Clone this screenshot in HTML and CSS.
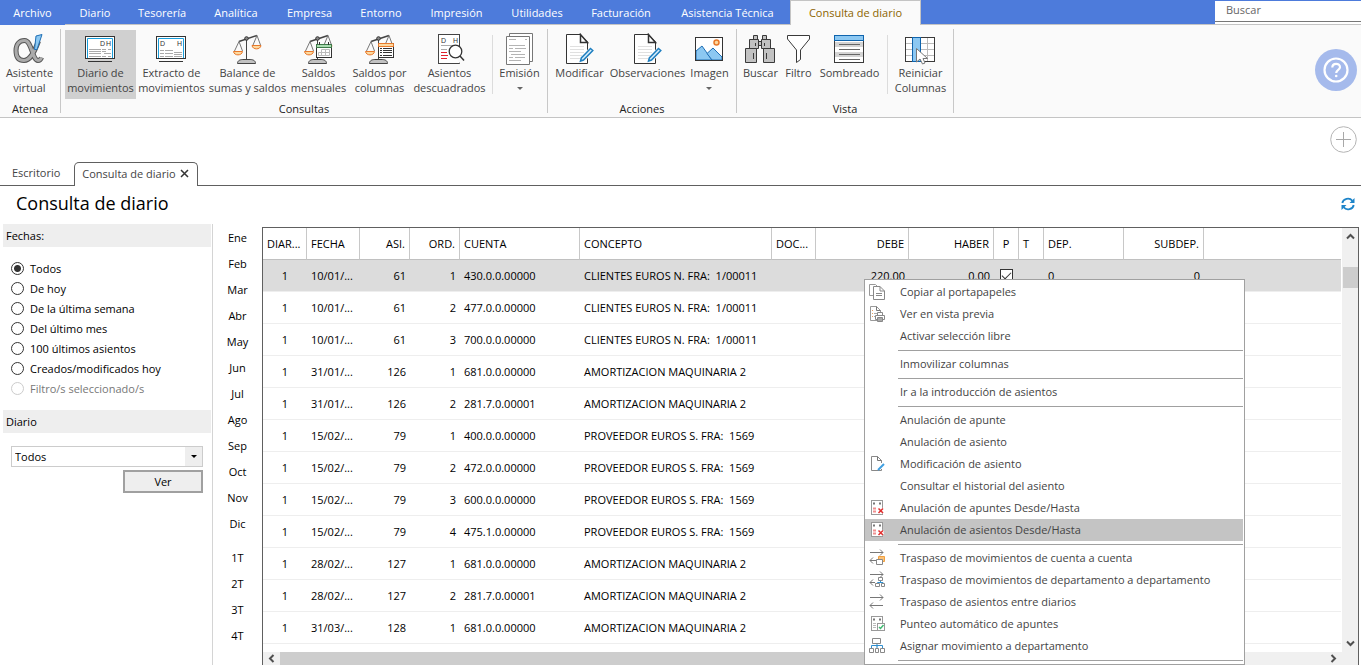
FILE: index.html
```html
<!DOCTYPE html>
<html lang="es">
<head>
<meta charset="utf-8">
<title>Consulta de diario</title>
<link rel="stylesheet" href="styles.css">
</head>
<body>
<svg class="defs" aria-hidden="true">
  <symbol id="scale" viewBox="0 0 32 32">
    <path d="M8 8.500L26 2.500" stroke="#444" stroke-width="1.500" fill="none"/>
    <path d="M15.500 6V27" stroke="#444"/>
    <circle cx="15.500" cy="5.500" r="1.800" fill="#888" stroke="#333"/>
    <path d="M8 8.500L3.500 18M8 8.500L11.500 18M26 2.500L22 12M26 2.500L29.500 12" stroke="#777" fill="none"/>
    <path d="M2.500 18.500H11.500C11 23 3 23 2.500 18.500Z" fill="#fdd9a0" stroke="#e8792b"/>
    <path d="M21 12.500H30C29.500 17 21.500 17 21 12.500Z" fill="#fdd9a0" stroke="#e8792b"/>
    <path d="M6.500 30.500C6.500 27 10 26.500 12 26.500H19C21 26.500 24.500 27 24.500 30.500Z" fill="#c2c2c2" stroke="#444"/>
  </symbol>
  <symbol id="edit-page" viewBox="0 0 32 32">
    <path d="M3.500 1.500H17.500L24.500 9V30.500H3.500Z" fill="#fff" stroke="#333"/>
    <path d="M17.500 1.500V9.500H24.500Z" fill="#fff" stroke="#333" stroke-width="1.500"/>
    <path d="M7 13.500H21M7 16.500H21M7 19.500H21M7 22.500H19M7 25.500H17" stroke="#e0e0e0"/>
    <path d="M26.500 14L31 18.500L20 30L15 30Z" fill="#fafafa"/>
    <path d="M27.500 15.500L29.800 17.500L20.500 27L17.500 28L18.300 25Z" fill="#d6ecfa" stroke="#1f7fc0" stroke-width="1.500"/>
  </symbol>
  <symbol id="void-entry" viewBox="0 0 18 18">
    <rect x="3.500" y="1.500" width="11" height="14" fill="#fff" stroke="#999"/>
    <path d="M5 4.500H7M11 4.500H13" stroke="#777" stroke-width="2"/>
    <path d="M5 9.500H8M5 12.500H8" stroke="#f09090" stroke-width="2"/>
    <path d="M10.500 9.500L15 14M15 9.500L10.500 14" stroke="#fff" stroke-width="3.500"/>
    <path d="M10.500 9.500L15 14M15 9.500L10.500 14" stroke="#e03030" stroke-width="1.500"/>
  </symbol>
</svg>

<div class="app">
  <nav class="menubar">
    <div class="menu-tabs">
      <a class="menu-tab" href="#">Archivo</a>
      <a class="menu-tab" href="#">Diario</a>
      <a class="menu-tab" href="#">Tesorería</a>
      <a class="menu-tab" href="#">Analítica</a>
      <a class="menu-tab" href="#">Empresa</a>
      <a class="menu-tab" href="#">Entorno</a>
      <a class="menu-tab" href="#">Impresión</a>
      <a class="menu-tab" href="#">Utilidades</a>
      <a class="menu-tab" href="#">Facturación</a>
      <a class="menu-tab" href="#">Asistencia Técnica</a>
      <a class="menu-tab current" href="#">Consulta de diario</a>
    </div>
    <input class="search" type="search" placeholder="Buscar" aria-label="Buscar">
  </nav>

  <header class="ribbon">
    <section class="group atenea">
      <div class="tools">
        <button class="tool">
          <svg class="icon" viewBox="0 0 32 32">
            <path d="M25.500 8C21 20 17 27.500 11 27.500C5 27.500 3 23 3 17.500C3 11 6.500 7.500 11.500 7.500C19 7.500 19 27 25 27.500C27 27.500 28 26 28.500 24.500" fill="none" stroke="#555" stroke-width="5"/>
            <path d="M25.500 8C21 20 17 27.500 11 27.500C5 27.500 3 23 3 17.500C3 11 6.500 7.500 11.500 7.500C19 7.500 19 27 25 27.500C27 27.500 28 26 28.500 24.500" fill="none" stroke="#aaa" stroke-width="3"/>
            <path d="M23 3L29 1.500L24 16.500H21.500Z" fill="#8cc8f2" stroke="#1f6fb5"/>
          </svg>
          <span>Asistente<br>virtual</span>
        </button>
      </div>
      <h2 class="group-name">Atenea</h2>
    </section>

    <section class="group consultas">
      <div class="tools">
        <button class="tool pressed">
          <svg class="icon" viewBox="0 0 32 32">
            <rect x="1.500" y="3.500" width="29" height="22" fill="#fff" stroke="#333"/>
            <path d="M3.500 25V5.500H28.500V25" fill="none" stroke="#1a9fdc"/>
            <text class="glyph" x="16" y="13">D</text><text class="glyph" x="22" y="13">H</text>
            <path d="M5 16.500H17M5 18.500H17M5 20.500H17M5 23.500H17M18 16.500H22M24 16.500H27M18 18.500H22M20 20.500H27M18 23.500H22M24 23.500H27" stroke="#aaa"/>
            <path d="M4 28.500H28" stroke="#333"/>
          </svg>
          <span>Diario de<br>movimientos</span>
        </button>
        <button class="tool">
          <svg class="icon" viewBox="0 0 32 32">
            <rect x="1.500" y="3.500" width="29" height="22" fill="#fff" stroke="#333"/>
            <path d="M3.500 25V5.500H28.500V25" fill="none" stroke="#1a9fdc"/>
            <text class="glyph" x="5" y="13">D</text><text class="glyph" x="22" y="13">H</text>
            <path d="M5 17.500H9M5 20.500H9M5 23.500H9M10 17.500H18M10 20.500H18M10 23.500H18M19 19.500H27M19 21.500H27M19 23.500H27" stroke="#aaa"/>
            <path d="M4 28.500H28" stroke="#333"/>
          </svg>
          <span>Extracto de<br>movimientos</span>
        </button>
        <button class="tool">
          <svg class="icon"><use href="#scale"/></svg>
          <span>Balance de<br>sumas y saldos</span>
        </button>
        <button class="tool">
          <svg class="icon" viewBox="0 0 32 32">
            <use href="#scale"/>
            <rect x="14.500" y="11.500" width="15" height="13" fill="#fff" stroke="#333"/>
            <path d="M14.500 11.500H29.500V14.500H14.500Z" fill="#a8dcb0" stroke="#3d7a49"/>
            <path d="M17.500 9V12M26.500 9V12" stroke="#333"/>
            <path d="M19.500 16.500H27.500V22.500H16.500V19.500H27.500M19.500 16.500V22.500M23.500 16.500V22.500" fill="none" stroke="#bbb"/>
          </svg>
          <span>Saldos<br>mensuales</span>
        </button>
        <button class="tool">
          <svg class="icon" viewBox="0 0 32 32">
            <use href="#scale"/>
            <rect x="15.500" y="10.500" width="15" height="14" fill="#fff" stroke="#333"/>
            <path d="M15.500 10.500H30.500V13.500H15.500Z" fill="#fdd9a0" stroke="#e8792b"/>
            <path d="M17 15.500H19M20 15.500H29M17 17.500H19M20 17.500H29M17 19.500H19M20 19.500H29M17 22.500H19M20 22.500H29" stroke="#333"/>
          </svg>
          <span>Saldos por<br>columnas</span>
        </button>
        <button class="tool">
          <svg class="icon" viewBox="0 0 32 32">
            <rect x="5.500" y="1.500" width="21" height="29" fill="#fff" stroke="#444"/>
            <text class="glyph" x="8" y="10">D</text><text class="glyph" x="20" y="10">H</text>
            <path d="M8 12.500H24M8 16.500H14" stroke="#aaa"/>
            <path d="M8 19.500H14M8 22.500H15M8 25.500H14" stroke="#e0202c"/>
            <path d="M26 22L30 29" stroke="#fafafa" stroke-width="7"/>
            <circle cx="22.500" cy="18.500" r="6.300" fill="#fff" stroke="#333" stroke-width="1.300"/>
            <path d="M27 23L31 27.500" stroke="#333" stroke-width="1.500"/>
          </svg>
          <span>Asientos<br>descuadrados</span>
        </button>
        <i class="tool-rule"></i>
        <button class="tool">
          <svg class="icon" viewBox="-1 0 32 32">
            <path d="M5.500 0.500H28.500V28.500H5.500Z" fill="#fff" stroke="#777"/>
            <path d="M2.500 3.500H25.500V31.500H2.500Z" fill="#fff" stroke="#777"/>
            <path d="M5 6.500H12M5 12.500H21M5 15.500H9M11 15.500H22M5 18.500H17M7 21.500H21M5 24.500H9M11 24.500H21M5 27.500H17M21 6.500H23" stroke="#b4b4b4"/>
          </svg>
          <span>Emisión<i class="caret"></i></span>
        </button>
      </div>
      <h2 class="group-name">Consultas</h2>
    </section>

    <section class="group acciones">
      <div class="tools">
        <button class="tool">
          <svg class="icon"><use href="#edit-page"/></svg>
          <span>Modificar</span>
        </button>
        <button class="tool">
          <svg class="icon"><use href="#edit-page"/></svg>
          <span>Observaciones</span>
        </button>
        <button class="tool">
          <svg class="icon" viewBox="0 0 32 32">
            <rect x="2.500" y="4.500" width="27" height="23" fill="#fff" stroke="#333"/>
            <path d="M3 18L9 13L19 27H3Z" fill="#8cc8f2" stroke="#1f6fb5"/>
            <path d="M14 20.500L20 15L29 24V27H19Z" fill="#8cc8f2" stroke="#1f6fb5"/>
            <circle cx="23.500" cy="9.500" r="2.500" fill="#fdd9a0" stroke="#e8792b" stroke-width="1.500"/>
            <rect x="2.500" y="4.500" width="27" height="23" fill="none" stroke="#333"/>
          </svg>
          <span>Imagen<i class="caret"></i></span>
        </button>
      </div>
      <h2 class="group-name">Acciones</h2>
    </section>

    <section class="group vista">
      <div class="tools">
        <button class="tool">
          <svg class="icon" viewBox="0 0 32 32">
            <g fill="#c2c2c2" stroke="#3a3a3a">
              <path d="M9.500 2.500H13.500V6.500H9.500ZM18.500 2.500H22.500V6.500H18.500Z"/>
              <rect x="14.500" y="8.500" width="3" height="4"/>
              <path d="M5.500 6.500H14.500V15.500H5.500ZM17.500 6.500H26.500V15.500H17.500Z"/>
              <path d="M1.500 15.500H12.500V29.500H1.500ZM19.500 15.500H30.500V29.500H19.500Z"/>
              <path d="M9.500 20V26M22.500 20V26M11.500 10V13M20.500 10V13"/>
            </g>
          </svg>
          <span>Buscar</span>
        </button>
        <button class="tool">
          <svg class="icon" viewBox="0 0 32 32">
            <path d="M5.500 2.500H27.500V6L18.500 17V26.500L14.500 29.500V17L5.500 6Z" fill="#fff" stroke="#3a3a3a"/>
          </svg>
          <span>Filtro</span>
        </button>
        <button class="tool">
          <svg class="icon" viewBox="0 0 32 32">
            <rect x="1.500" y="2.500" width="29" height="27" fill="#fff" stroke="#3a3a3a"/>
            <path d="M2 11.500H30M2 21.500H30" stroke="#d4d4d4" stroke-width="5"/>
            <path d="M6 11.500H27M6 16.500H27M6 21.500H27M6 26.500H27" stroke="#666"/>
            <rect x="1.500" y="2.500" width="29" height="5" fill="#8cc8f2" stroke="#0f64ad"/>
          </svg>
          <span>Sombreado</span>
        </button>
        <i class="tool-rule"></i>
        <button class="tool">
          <svg class="icon" viewBox="0 0 32 32">
            <rect x="1.500" y="4.500" width="29" height="24" fill="#fff" stroke="#3a3a3a"/>
            <path d="M2 10.500H30M2 16.500H30M2 22.500H30M16.500 5V28M23.500 5V28" stroke="#bbb"/>
            <rect x="8.500" y="4.500" width="8" height="24" fill="#8cc8f2" stroke="#0f64ad"/>
            <path d="M12.500 15.500V29L16 26L18.500 31L21 30L19 25.500H23.500Z" fill="#fff" stroke="#777"/>
          </svg>
          <span>Reiniciar<br>Columnas</span>
        </button>
      </div>
      <h2 class="group-name">Vista</h2>
    </section>

    <button class="help" aria-label="Ayuda">
      <svg viewBox="0 0 42 42">
        <circle cx="21" cy="21" r="21" fill="#a5baec"/>
        <circle cx="21" cy="21" r="11.500" fill="none" stroke="#fff" stroke-width="2.200"/>
        <path d="M17.300 18.500C17.300 13.500 25 13.800 25 18.200C25 21 21.200 20.800 21.200 24" fill="none" stroke="#fff" stroke-width="2.200"/>
        <circle cx="21.200" cy="27" r="1.300" fill="#fff"/>
      </svg>
    </button>
  </header>

  <div class="tabstrip">
    <a class="doc-tab" href="#">Escritorio</a>
    <div class="doc-tab active">
      <a href="#">Consulta de diario</a>
      <button class="close" aria-label="Cerrar"><svg viewBox="0 0 9 9"><path d="M1 1L8 8M8 1L1 8" stroke="#333" stroke-width="1.500"/></svg></button>
    </div>
    <button class="add" aria-label="Añadir"><svg viewBox="0 0 27 27"><circle cx="13.500" cy="13.500" r="12.800" fill="none" stroke="#b4b4b4"/><path d="M6 13.500H21M13.500 6V21" stroke="#a8a8a8"/></svg></button>
  </div>

  <div class="titlebar">
    <h1>Consulta de diario</h1>
    <button class="refresh" aria-label="Actualizar"><svg viewBox="0 0 14 14"><path d="M1.300 6C2 1.500 8.500 0 11.300 3.700M12.700 8C12 12.500 5.500 14 2.700 10.300" fill="none" stroke="#1d84c9" stroke-width="1.800"/><path d="M13.500 1V6H8.500ZM0.500 13V8H5.500Z" fill="#1d84c9"/></svg></button>
  </div>

  <main class="workspace">
    <aside class="filters">
      <h3 class="panel-head">Fechas:</h3>
      <div class="radios">
        <label><input type="radio" name="fecha" checked>Todos</label>
        <label><input type="radio" name="fecha">De hoy</label>
        <label><input type="radio" name="fecha">De la última semana</label>
        <label><input type="radio" name="fecha">Del último mes</label>
        <label><input type="radio" name="fecha">100 últimos asientos</label>
        <label><input type="radio" name="fecha">Creados/modificados hoy</label>
        <label class="off"><input type="radio" name="fecha" disabled>Filtro/s seleccionado/s</label>
      </div>
      <h3 class="panel-head">Diario</h3>
      <div class="journal">
        <div class="select-box">
          <select aria-label="Diario"><option>Todos</option></select>
          <span class="select-arrow"></span>
        </div>
        <button class="view">Ver</button>
      </div>
    </aside>

    <nav class="periods">
      <a href="#">Ene</a><a href="#">Feb</a><a href="#">Mar</a><a href="#">Abr</a><a href="#">May</a><a href="#">Jun</a><a href="#">Jul</a><a href="#">Ago</a><a href="#">Sep</a><a href="#">Oct</a><a href="#">Nov</a><a href="#">Dic</a>
      <a class="quarter" href="#">1T</a><a href="#">2T</a><a href="#">3T</a><a href="#">4T</a>
    </nav>

    <section class="grid">
      <div class="grid-body">
        <table>
          <colgroup><col class="c44"><col class="c53"><col class="c50"><col class="c50"><col class="c120"><col class="c192"><col class="c44"><col class="c93"><col class="c85"><col class="c25"><col class="c25"><col class="c80"><col class="c80"><col></colgroup>
          <thead>
            <tr><th>DIAR...</th><th>FECHA</th><th class="r">ASI.</th><th class="r">ORD.</th><th>CUENTA</th><th>CONCEPTO</th><th>DOC...</th><th class="r">DEBE</th><th class="r">HABER</th><th class="c">P</th><th>T</th><th>DEP.</th><th class="r">SUBDEP.</th><th></th></tr>
          </thead>
          <tbody>
            <tr class="picked"><td class="c">1</td><td>10/01/...</td><td class="r">61</td><td class="r">1</td><td>430.0.0.00000</td><td class="pre">CLIENTES EUROS N. FRA:  1/00011</td><td></td><td class="r">220.00</td><td class="r">0.00</td><td class="c"><input type="checkbox" checked aria-label="Punteado"></td><td></td><td>0</td><td class="r">0</td><td></td></tr>
            <tr><td class="c">1</td><td>10/01/...</td><td class="r">61</td><td class="r">2</td><td>477.0.0.00000</td><td class="pre">CLIENTES EUROS N. FRA:  1/00011</td><td colspan="8"></td></tr>
            <tr><td class="c">1</td><td>10/01/...</td><td class="r">61</td><td class="r">3</td><td>700.0.0.00000</td><td class="pre">CLIENTES EUROS N. FRA:  1/00011</td><td colspan="8"></td></tr>
            <tr><td class="c">1</td><td>31/01/...</td><td class="r">126</td><td class="r">1</td><td>681.0.0.00000</td><td>AMORTIZACION MAQUINARIA 2</td><td colspan="8"></td></tr>
            <tr><td class="c">1</td><td>31/01/...</td><td class="r">126</td><td class="r">2</td><td>281.7.0.00001</td><td>AMORTIZACION MAQUINARIA 2</td><td colspan="8"></td></tr>
            <tr><td class="c">1</td><td>15/02/...</td><td class="r">79</td><td class="r">1</td><td>400.0.0.00000</td><td class="pre">PROVEEDOR EUROS S. FRA:  1569</td><td colspan="8"></td></tr>
            <tr><td class="c">1</td><td>15/02/...</td><td class="r">79</td><td class="r">2</td><td>472.0.0.00000</td><td class="pre">PROVEEDOR EUROS S. FRA:  1569</td><td colspan="8"></td></tr>
            <tr><td class="c">1</td><td>15/02/...</td><td class="r">79</td><td class="r">3</td><td>600.0.0.00000</td><td class="pre">PROVEEDOR EUROS S. FRA:  1569</td><td colspan="8"></td></tr>
            <tr><td class="c">1</td><td>15/02/...</td><td class="r">79</td><td class="r">4</td><td>475.1.0.00000</td><td class="pre">PROVEEDOR EUROS S. FRA:  1569</td><td colspan="8"></td></tr>
            <tr><td class="c">1</td><td>28/02/...</td><td class="r">127</td><td class="r">1</td><td>681.0.0.00000</td><td>AMORTIZACION MAQUINARIA 2</td><td colspan="8"></td></tr>
            <tr><td class="c">1</td><td>28/02/...</td><td class="r">127</td><td class="r">2</td><td>281.7.0.00001</td><td>AMORTIZACION MAQUINARIA 2</td><td colspan="8"></td></tr>
            <tr><td class="c">1</td><td>31/03/...</td><td class="r">128</td><td class="r">1</td><td>681.0.0.00000</td><td>AMORTIZACION MAQUINARIA 2</td><td colspan="8"></td></tr>
          </tbody>
        </table>
      </div>
      <div class="vscroll">
        <svg class="arrow" viewBox="0 0 9 9"><path d="M1 6.500L4.500 3L8 6.500" fill="none" stroke="#505050" stroke-width="2"/></svg>
        <i class="vthumb"></i>
        <svg class="arrow" viewBox="0 0 9 9"><path d="M1 2.500L4.500 6L8 2.500" fill="none" stroke="#505050" stroke-width="2"/></svg>
      </div>
      <div class="hscroll">
        <svg class="arrow" viewBox="0 0 9 9"><path d="M6.500 1L3 4.500L6.500 8" fill="none" stroke="#505050" stroke-width="2"/></svg>
        <i class="hthumb"></i>
        <svg class="arrow" viewBox="0 0 9 9"><path d="M2.500 1L6 4.500L2.500 8" fill="none" stroke="#505050" stroke-width="2"/></svg>
      </div>
      <i class="corner"></i>

      <div class="context-menu" role="menu">
        <button role="menuitem"><svg viewBox="0 0 18 18"><path d="M6 12.500H1.500V1.500H7.500L10 4" fill="#fff" stroke="#999"/><path d="M5.500 3.500H12L16.500 8V16.500H5.500Z" fill="#fff" stroke="#888"/><path d="M12 3.500V8H16.500M8 10.500H14M8 12.500H14" fill="none" stroke="#888"/></svg><span>Copiar al portapapeles</span></button>
        <button role="menuitem"><svg viewBox="0 0 18 18"><path d="M9 15.500H2.500V1.500H8.500L12.500 5.500V8" fill="#fff" stroke="#999"/><path d="M8.500 1.500V5.500H12.500" fill="none" stroke="#777"/><path d="M4 5.500H5M4 8.500H5M4 11.500H5" stroke="#e8a060"/><path d="M6 8.500H9M6 11.500H8" stroke="#aaa"/><path d="M9.500 11V7.500H14.500V11M7.500 10.500H16.500V14.500H7.500Z" fill="#fff" stroke="#888"/><path d="M9.500 12.500H14.500V16.500H9.500Z" fill="#aaa" stroke="#888"/></svg><span>Ver en vista previa</span></button>
        <button role="menuitem"><svg viewBox="0 0 18 18"></svg><span>Activar selección libre</span></button>
        <hr>
        <button role="menuitem"><svg viewBox="0 0 18 18"></svg><span>Inmovilizar columnas</span></button>
        <hr>
        <button role="menuitem"><svg viewBox="0 0 18 18"></svg><span>Ir a la introducción de asientos</span></button>
        <hr>
        <button role="menuitem"><svg viewBox="0 0 18 18"></svg><span>Anulación de apunte</span></button>
        <button role="menuitem"><svg viewBox="0 0 18 18"></svg><span>Anulación de asiento</span></button>
        <button role="menuitem"><svg viewBox="0 0 18 18"><path d="M13.500 8V5.500L9.500 1.500H3.500V15.500H13.500V14" fill="#fff" stroke="#888"/><path d="M9.500 1.500V5.500H13.500" fill="none" stroke="#777"/><path d="M10 15L16 9" stroke="#3f9fe0" stroke-width="2"/></svg><span>Modificación de asiento</span></button>
        <button role="menuitem"><svg viewBox="0 0 18 18"></svg><span>Consultar el historial del asiento</span></button>
        <button role="menuitem"><svg><use href="#void-entry"/></svg><span>Anulación de apuntes Desde/Hasta</span></button>
        <button role="menuitem" class="hover"><svg><use href="#void-entry"/></svg><span>Anulación de asientos Desde/Hasta</span></button>
        <hr>
        <button role="menuitem"><svg viewBox="0 0 18 18"><path d="M2 3.500H15M12 0.500L15 3.500L12 6.500M2 11.500H9M5 8.500L2 11.500L5 14.500" fill="none" stroke="#777"/><path d="M10.500 7.500H16.500V12.500H10.500Z" fill="#fbc27a" stroke="#f0a040"/><path d="M8.500 10.500H14.500V15.500H8.500Z" fill="#fff" stroke="#888"/></svg><span>Traspaso de movimientos de cuenta a cuenta</span></button>
        <button role="menuitem"><svg viewBox="0 0 18 18"><path d="M2 3.500H15M12 0.500L15 3.500L12 6.500M2 11.500H7M5 8.500L2 11.500L5 14.500" fill="none" stroke="#777"/><path d="M12.500 9V11.500M9.500 13V11.500H15V13" fill="none" stroke="#2f8fd0"/><path d="M10.500 6.500H14.500V9.500H10.500ZM7.500 12.500H11.500V15.500H7.500ZM13.500 12.500H16.500V15.500H13.500Z" fill="#fff" stroke="#888"/></svg><span>Traspaso de movimientos de departamento a departamento</span></button>
        <button role="menuitem"><svg viewBox="0 0 18 18"><path d="M2 4.500H15M12 1.500L15 4.500L12 7.500M15 12.500H2M5 9.500L2 12.500L5 15.500" fill="none" stroke="#777"/></svg><span>Traspaso de asientos entre diarios</span></button>
        <button role="menuitem"><svg viewBox="0 0 18 18"><rect x="3.500" y="1.500" width="11" height="14" fill="#fff" stroke="#999"/><path d="M5 4.500H7M11 4.500H13" stroke="#777" stroke-width="2"/><path d="M5 8.500H8M5 10.500H8M5 12.500H8" stroke="#bbb"/><rect x="9.500" y="8.500" width="7" height="7" fill="#fff" stroke="#999"/><path d="M11 12L12.500 13.500L15.500 10" fill="none" stroke="#3fba70" stroke-width="1.500"/></svg><span>Punteo automático de apuntes</span></button>
        <button role="menuitem"><svg viewBox="0 0 18 18"><path d="M9 6V9.500M3.500 12V8.500H14.500V12M9 8V12" fill="none" stroke="#2f8fd0"/><path d="M4.500 1.500H12.500V6.500H4.500ZM1.500 11.500H5.500V15.500H1.500ZM7.500 11.500H10.500V15.500H7.500ZM12.500 11.500H16.500V15.500H12.500Z" fill="#fff" stroke="#888"/></svg><span>Asignar movimiento a departamento</span></button>
        <hr>
      </div>
    </section>
  </main>
</div>
</body>
</html>
```
FILE: styles.css
```css
* { box-sizing: border-box; }
html, body { height: 100%; margin: 0; }
body {
  font: 11px/15px "Open Sans", "Noto Sans", sans-serif;
  color: #000;
  background: #fff;
  overflow: hidden;
}
a { color: inherit; text-decoration: none; }
button, input, select { font: inherit; color: inherit; }
button { border: 0; padding: 0; background: none; }
h1, h2, h3 { margin: 0; font-weight: 400; }
svg { display: block; }
.defs { position: absolute; width: 0; height: 0; }
.app { height: 100%; display: flex; flex-direction: column; }

.menubar {
  display: flex;
  justify-content: space-between;
  flex: none;
  height: 25px;
  background: #4d7bdb;
  border-bottom: 1px solid #c4c4c4;
}
.menu-tabs {
  display: grid;
  grid-template-columns: 65px 60px 74px 74px 73px 70px 81px 80px 88px 125px 131px;
  height: 25px;
}
.menu-tab {
  color: #fff;
  text-align: center;
  line-height: 26px;
  white-space: nowrap;
}
.menu-tab:first-child { background: #4d7bdb; }
.menu-tab.current {
  color: #8c6400;
  background: #fafafa;
  border: 1px solid #c4c4c4;
  border-bottom: 0;
  line-height: 24px;
}
.search {
  width: 146px;
  height: 21px;
  margin-top: 1px;
  padding: 0 11px 3px;
  border: 0;
  border-bottom: 1px solid #777;
  border-radius: 0;
  background: #fff;
  box-shadow: 0 2px #fff;
  outline: 0;
}
.search::placeholder { color: #666; opacity: 1; }

.ribbon {
  display: flex;
  flex: none;
  height: 93px;
  background: #fafafa;
  border-bottom: 1px solid #c4c4c4;
}
.group {
  display: flex;
  flex-direction: column;
  margin: 4px 0;
  border-right: 1px solid #c8c8c8;
}
.tools { display: grid; height: 69px; margin-top: 1px; padding-right: 1px; }
.atenea .tools { grid-template-columns: 59px; }
.consultas .tools { grid-template-columns: 71px 71px 81px 61px 61px 79px 7px 47px; padding: 0 4px; }
.acciones .tools { grid-template-columns: 63px 73px 51px; }
.vista .tools { grid-template-columns: 47px 29px 73px 3px 63px; }
.tool {
  display: flex;
  flex-direction: column;
  align-items: center;
  padding-top: 3px;
  color: #444;
  white-space: nowrap;
}
.tool.pressed { background: #d0d0d0; }
.icon { width: 32px; height: 32px; flex: none; margin-right: 1px; }
.tool span { margin: 0 -12px; }
.glyph { font: 7px "Liberation Sans", sans-serif; fill: #333; }
.caret {
  display: block;
  width: 0;
  margin: 7px auto 0;
  border: 3px solid transparent;
  border-top-color: #666;
}
.tool-rule { width: 1px; height: 59px; margin: 5px auto 0; background: #dcdcdc; }
.group-name { font-size: 11px; line-height: 19px; text-align: center; color: #222; }
.group-name { height: 14px; }
.help { width: 42px; height: 42px; margin: 24px 4px 0 auto; }

.tabstrip {
  display: flex;
  align-items: flex-end;
  flex: none;
  height: 68px;
  border-bottom: 1px solid #606060;
  color: #444;
  padding-left: 12px;
}
.doc-tab { line-height: 24px; }
.doc-tab.active {
  display: flex;
  align-items: center;
  gap: 4px;
  height: 24px;
  margin: 0 0 -1px 14px;
  padding: 0 8px 2px 7px;
  border: 1px solid #606060;
  border-bottom: 0;
  border-radius: 5px 5px 0 0;
  background: #fff;
}
.close { width: 9px; height: 9px; }
.add { width: 27px; height: 27px; margin: 0 4px 32px auto; }

.titlebar {
  display: flex;
  align-items: center;
  justify-content: space-between;
  flex: none;
  height: 38px;
  padding: 0 6px 2px 16px;
}
h1 { font-size: 18px; line-height: 24px; padding-bottom: 2px; }
.refresh { width: 14px; height: 14px; }

.workspace { display: flex; flex: 1; min-height: 0; }
.filters { width: 213px; flex: none; padding: 0 1px 0 3px; border-right: 1px solid #d4d4d4; }
.panel-head {
  height: 23px;
  padding-left: 3px;
  font-size: 11px;
  line-height: 24px;
  background: #eee;
}
.radios { padding: 11px 8px; height: 163px; }
.radios label { display: flex; align-items: center; gap: 6px; height: 20px; }
.radios .off { color: #777; }
.radios input {
  appearance: none;
  width: 13px;
  height: 13px;
  margin: 0;
  border: 1px solid #333;
  border-radius: 50%;
  background: #fff;
}
.radios input:checked { background: radial-gradient(circle, #333 3px, #fff 4px); }
.radios input:disabled { border-color: #ccc; }
.journal { padding: 13px 8px 0; }
.select-box { display: grid; grid-template-columns: 1fr 17px; height: 21px; border: 1px solid #ccc; }
.select-box select {
  grid-area: 1 / 1 / 2 / 3;
  appearance: none;
  width: 100%;
  padding: 0 3px;
  border: 0;
  border-radius: 0;
  background: none;
}
.select-arrow {
  grid-area: 1 / 2;
  display: grid;
  place-items: center;
  background: #eee;
  pointer-events: none;
}
.select-arrow::after { content: ""; margin-top: 3px; border: 3px solid transparent; border-top-color: #000; }
.view {
  display: block;
  width: 80px;
  height: 23px;
  margin: 3px 0 0 auto;
  border: 2px solid #a0a0a0;
  background: #eee;
}

.periods { display: flex; flex-direction: column; width: 49px; flex: none; padding-top: 1px; text-align: center; }
.periods a { line-height: 26px; }
.periods .quarter { margin-top: 8px; }

.grid {
  position: relative;
  display: grid;
  grid-template: minmax(0, 1fr) 13px / minmax(0, 1fr) 16px;
  flex: 1;
  margin: 3px 2px 0 0;
  border: 1px solid #606060;
  border-bottom: 0;
}
.grid-body { overflow: hidden; padding-right: 1px; }
table { width: 100%; table-layout: fixed; border-collapse: separate; border-spacing: 0; }
.c25 { width: 25px; }
.c44 { width: 44px; }
.c50 { width: 50px; }
.c53 { width: 53px; }
.c80 { width: 80px; }
.c85 { width: 85px; }
.c93 { width: 93px; }
.c120 { width: 120px; }
.c192 { width: 192px; }
th, td {
  height: 32px;
  padding: 0 4px 1px;
  font-weight: 400;
  text-align: left;
  white-space: nowrap;
}
th { border-right: 1px solid #c8c8c8; border-bottom: 1px solid #c0c0c0; }
th:last-child { border-right: 0; }
td { border-bottom: 1px solid #eee; }
.r { text-align: right; }
.c { text-align: center; }
.pre { white-space: pre; }
.picked td { background: #dcdcdc; }
td input {
  appearance: none;
  display: block;
  width: 13px;
  height: 13px;
  margin: 1px auto 0;
  border: 1px solid #333;
  background: #fff;
}
td input:checked::before {
  content: "";
  display: block;
  width: 8px;
  height: 4px;
  margin: 2px 1px;
  border: solid #333;
  border-width: 0 0 1px 1px;
  transform: rotate(-45deg);
}
.vscroll { display: flex; flex-direction: column; align-items: center; padding: 4px 0; background: #f0f0f0; }
.arrow { width: 9px; height: 9px; flex: none; }
.vthumb { width: 15px; height: 21px; margin: 26px 0 auto; background: #cdcdcd; }
.hscroll { display: flex; align-items: center; padding: 0 4px; background: #f0f0f0; }
.hthumb { width: 700px; height: 13px; margin: 0 auto 0 4px; background: #cdcdcd; }
.corner { background: #f0f0f0; }

.context-menu {
  position: absolute;
  top: 51px;
  left: 601px;
  width: 381px;
  padding: 1px 1px 1px 0;
  border: 1px solid #a0a0a0;
  background: #fff;
  color: #444;
}
.context-menu button {
  display: flex;
  align-items: center;
  gap: 14px;
  width: 100%;
  height: 22px;
  padding-left: 3px;
  white-space: nowrap;
}
.context-menu span { padding-bottom: 2px; }
.context-menu svg { width: 18px; height: 18px; flex: none; }
.context-menu .hover { background: #c4c4c4; }
.context-menu hr { height: 1px; margin: 3px 0 2px 33px; border: 0; background: #a0a0a0; }
```
